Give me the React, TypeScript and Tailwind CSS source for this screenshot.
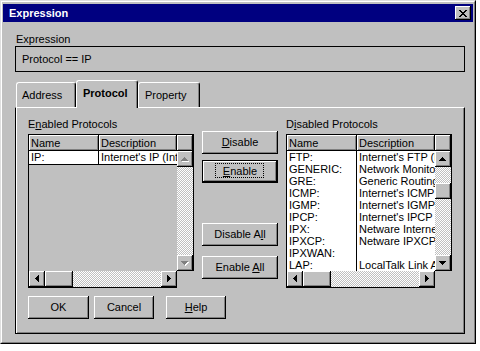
import React from "react";

const raised = "bg-[#c0c0c0] shadow-[inset_-1px_-1px_#000,inset_1px_1px_#fff,inset_-2px_-2px_#808080]";
const checker = "bg-[image:conic-gradient(#c0c0c0_25%,#fff_0_50%,#c0c0c0_0_75%,#fff_0)] bg-[length:2px_2px]";

type Dir = "up" | "down" | "left" | "right";

const arrowRects: Record<Dir, number[][]> = {
  up: [[3, 0, 1, 1], [2, 1, 3, 1], [1, 2, 5, 1], [0, 3, 7, 1]],
  down: [[0, 0, 7, 1], [1, 1, 5, 1], [2, 2, 3, 1], [3, 3, 1, 1]],
  left: [[0, 3, 1, 1], [1, 2, 1, 3], [2, 1, 1, 5], [3, 0, 1, 7]],
  right: [[0, 0, 1, 7], [1, 1, 1, 5], [2, 2, 1, 3], [3, 3, 1, 1]],
};

function Arrow({ dir, disabled }: { dir: Dir; disabled?: boolean }) {
  const vertical = dir === "up" || dir === "down";
  const w = vertical ? 8 : 5;
  const h = vertical ? 5 : 8;
  const rects = arrowRects[dir];
  return (
    <svg width={w} height={h} viewBox={`0 0 ${w} ${h}`} shapeRendering="crispEdges">
      {disabled &&
        rects.map(([x, y, rw, rh], i) => (
          <rect key={"s" + i} x={x + 1} y={y + 1} width={rw} height={rh} fill="#fff" />
        ))}
      {rects.map(([x, y, rw, rh], i) => (
        <rect key={i} x={x} y={y} width={rw} height={rh} fill={disabled ? "#808080" : "#000"} />
      ))}
    </svg>
  );
}

function ScrollBtn({ dir, disabled }: { dir: Dir; disabled?: boolean }) {
  return (
    <div className={`${raised} flex h-[16px] w-[16px] shrink-0 items-center justify-center`}>
      <Arrow dir={dir} disabled={disabled} />
    </div>
  );
}

function CloseGlyph() {
  const px = [
    [0, 0, 2], [6, 0, 2],
    [1, 1, 2], [5, 1, 2],
    [2, 2, 4],
    [3, 3, 2],
    [2, 4, 4],
    [1, 5, 2], [5, 5, 2],
    [0, 6, 2], [6, 6, 2],
  ];
  return (
    <svg width="8" height="7" viewBox="0 0 8 7" shapeRendering="crispEdges">
      {px.map(([x, y, w], i) => (
        <rect key={i} x={x} y={y} width={w} height={1} fill="#000" />
      ))}
    </svg>
  );
}

function Btn({
  children,
  className = "",
  isDefault = false,
}: {
  children: React.ReactNode;
  className?: string;
  isDefault?: boolean;
}) {
  return (
    <div
      className={`${raised} relative flex h-[23px] items-center justify-center ${
        isDefault ? "border border-black" : ""
      } ${className}`}
    >
      {isDefault && (
        <div className="absolute top-[2px] bottom-[4px] left-[12px] right-[13px] border border-dotted border-black" />
      )}
      <span className="whitespace-pre">{children}</span>
    </div>
  );
}

const disabledRows: [string, string][] = [
  ["FTP:", "Internet's FTP (File Transfer Protocol)"],
  ["GENERIC:", "Network Monitor Generic Protocol"],
  ["GRE:", "Generic Routing Encapsulation"],
  ["ICMP:", "Internet's ICMP (Internet Control)"],
  ["IGMP:", "Internet's IGMP (Internet Group)"],
  ["IPCP:", "Internet's IPCP (PPP IP Control)"],
  ["IPX:", "Netware Internetwork Packet Exchange"],
  ["IPXCP:", "Netware IPXCP Control Protocol"],
  ["IPXWAN:", ""],
  ["LAP:", "LocalTalk Link Access Protocol"],
];

function ListBox({ enabled }: { enabled?: boolean }) {
  return (
    <div className="mt-[3px] flex h-[154px] w-[166px] flex-col">
      <div className="flex h-[137px]">
        <div
          className={`flex w-[149px] flex-col overflow-hidden border-t border-l border-black ${
            enabled ? "bg-[#c0c0c0]" : "bg-white"
          }`}
        >
          <div className="flex h-[16px] shrink-0">
            <div className={`${raised} w-[70px] pl-[2px] leading-[16px]`}>Name</div>
            <div className={`${raised} w-[78px] pl-[2px] leading-[16px]`}>Description</div>
          </div>
          {enabled ? (
            <div className="flex h-[14px] shrink-0 border-b border-black bg-white leading-[13px]">
              <div className="w-[70px] border-r border-black pl-[2px]">IP:</div>
              <div className="w-[78px] overflow-hidden whitespace-nowrap pl-[2px]">
                Internet's IP (Internet Protocol)
              </div>
            </div>
          ) : (
            disabledRows.map(([name, desc]) => (
              <div key={name} className="flex h-[12px] shrink-0 leading-[12px]">
                <div className="w-[70px] border-r border-black pl-[2px]">{name}</div>
                <div className="w-[78px] overflow-hidden whitespace-nowrap pl-[2px]">{desc}</div>
              </div>
            ))
          )}
        </div>
        <div className="flex w-[17px] flex-col border-t border-r border-black">
          <div className={`${raised} h-[16px] shrink-0`} />
          <ScrollBtn dir="up" disabled={enabled} />
          <div className={`flex flex-1 flex-col ${checker}`}>
            {!enabled && <div className={`${raised} mt-[16px] h-[16px] w-[16px]`} />}
          </div>
          <ScrollBtn dir="down" disabled={enabled} />
        </div>
      </div>
      <div className="flex h-[17px]">
        <div className="flex w-[149px] border-b border-l border-black">
          <ScrollBtn dir="left" />
          <div className={`${raised} h-[16px] w-[28px] shrink-0`} />
          <div className={`flex-1 ${checker}`} />
          <ScrollBtn dir="right" />
        </div>
        <div className="w-[17px] bg-[#c0c0c0]" />
      </div>
    </div>
  );
}

export default function App() {
  return (
    <div className="h-[351px] w-[480px] bg-white font-[Liberation_Sans,Arial,sans-serif] text-[11px] leading-[13px] text-black">
      <div className="h-[344px] w-[476px] border border-t-[#dfdfdf] border-l-[#dfdfdf] border-r-black border-b-black">
        <div className="flex h-full flex-col border border-t-white border-l-white border-r-[#808080] border-b-[#808080] bg-[#c0c0c0] p-[1px]">
          {/* title bar */}
          <div className="mt-[1px] flex h-[18px] items-center justify-between bg-[#000080] pr-[2px] pl-[6px]">
            <span className="font-bold text-white">Expression</span>
            <div className={`${raised} flex h-[14px] w-[16px] items-center justify-center`}>
              <CloseGlyph />
            </div>
          </div>

          <div className="flex flex-col pl-[12px]">
            <div className="mt-[11px] h-[13px] pl-[1px]">Expression</div>
            <div className="flex h-[26px] w-[450px] items-center border border-black pl-[6px]">
              Protocol == IP
            </div>

            {/* tabs */}
            <div className="mt-[8px] flex h-[27px] items-end pl-[1px]">
              <div className="flex h-[25px] w-[60px] items-center rounded-t-[3px] border-t border-r border-l border-t-white border-r-black border-l-white pl-[5px] shadow-[inset_-1px_0_#808080]">
                Address
              </div>
              <div className="relative z-10 -mb-px flex h-[28px] w-[62px] items-center rounded-t-[3px] border-t border-r border-l border-t-white border-r-black border-l-white bg-[#c0c0c0] pb-[2px] pl-[6px] font-bold shadow-[inset_-1px_0_#808080]">
                Protocol
              </div>
              <div className="flex h-[25px] w-[62px] items-center rounded-t-[3px] border-t border-r border-l border-t-white border-r-black border-l-white pl-[6px] shadow-[inset_-1px_0_#808080]">
                Property
              </div>
            </div>

            {/* panel */}
            <div className="flex h-[227px] w-[450px] flex-col border border-black border-t-white pt-[10px] pl-[12px] shadow-[inset_1px_0_#fff,inset_-1px_-1px_#808080]">
              <div className="flex">
                <div className="flex flex-col">
                  <div className="h-[13px]">
                    E<span className="underline">n</span>abled Protocols
                  </div>
                  <ListBox enabled />
                </div>

                <div className="ml-[8px] flex w-[76px] flex-col pt-[13px]">
                  <Btn>
                    <span className="underline">D</span>isable
                  </Btn>
                  <Btn isDefault className="mt-[6px]">
                    <span className="underline">E</span>nable
                  </Btn>
                  <Btn className="mt-[40px]">
                    Disable A<span className="underline">l</span>l
                  </Btn>
                  <Btn className="mt-[10px]">
                    Enable <span className="underline">A</span>ll
                  </Btn>
                </div>

                <div className="ml-[8px] flex flex-col">
                  <div className="h-[13px]">
                    D<span className="underline">i</span>sabled Protocols
                  </div>
                  <ListBox />
                </div>
              </div>

              <div className="mt-[8px] flex">
                <Btn className="w-[61px]">OK</Btn>
                <Btn className="ml-[5px] w-[60px]">Cancel</Btn>
                <Btn className="ml-[12px] w-[60px]">
                  <span className="underline">H</span>elp
                </Btn>
              </div>
            </div>
          </div>
        </div>
      </div>
    </div>
  );
}
